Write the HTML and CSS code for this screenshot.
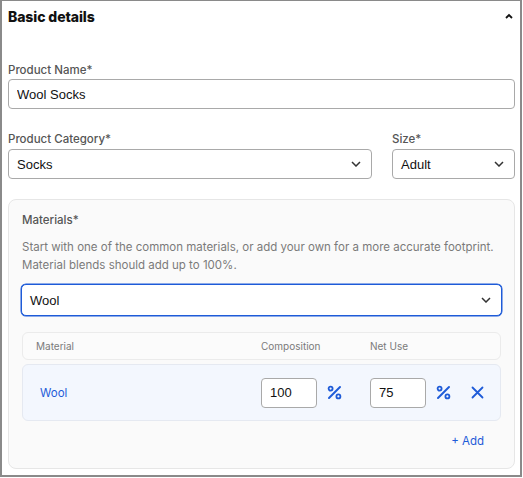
FILE: index.html
```html
<!DOCTYPE html>
<html lang="en">
<head>
<meta charset="utf-8">
<title>Basic details</title>
<link rel="stylesheet" href="styles.css">
</head>
<body>
<section class="card">
  <header class="card-head">
    <h2 class="card-title">Basic details</h2>
    <svg class="collapse" width="8" height="6" viewBox="0 0 8 6"><path d="M1 5 L4 2 L7 5" fill="none" stroke="#111" stroke-width="1.8"/></svg>
  </header>

  <div class="field">
    <label class="label">Product Name*</label>
    <input class="input" type="text" value="Wool Socks">
  </div>

  <div class="field-row">
    <div class="field grow">
      <label class="label">Product Category*</label>
      <div class="select"><span>Socks</span><svg class="chev" width="10" height="6" viewBox="0 0 10 6"><path d="M1 1 L5 5 L9 1" fill="none" stroke="#333" stroke-width="1.5"/></svg></div>
    </div>
    <div class="field size">
      <label class="label">Size*</label>
      <div class="select"><span>Adult</span><svg class="chev" width="10" height="6" viewBox="0 0 10 6"><path d="M1 1 L5 5 L9 1" fill="none" stroke="#333" stroke-width="1.5"/></svg></div>
    </div>
  </div>

  <div class="panel">
    <div class="label panel-label">Materials*</div>
    <p class="hint">Start with one of the common materials, or add your own for a more accurate footprint. Material blends should add up to 100%.</p>
    <div class="select focused"><span>Wool</span><svg class="chev" width="10" height="6" viewBox="0 0 10 6"><path d="M1 1 L5 5 L9 1" fill="none" stroke="#333" stroke-width="1.5"/></svg></div>

    <div class="table-head">
      <span>Material</span>
      <span>Composition</span>
      <span>Net Use</span>
    </div>
    <div class="table-row">
      <span class="mat-name">Wool</span>
      <div class="amount">
        <input class="num" type="text" value="100">
        <svg class="pct" width="15" height="15" viewBox="0 0 15 15"><circle cx="3.6" cy="3.6" r="2" fill="none" stroke="#1e5bd8" stroke-width="1.8"/><circle cx="11.4" cy="11.4" r="2" fill="none" stroke="#1e5bd8" stroke-width="1.8"/><path d="M13 2 L2 13" stroke="#1e5bd8" stroke-width="2" stroke-linecap="round"/></svg>
      </div>
      <div class="amount">
        <input class="num" type="text" value="75">
        <svg class="pct" width="15" height="15" viewBox="0 0 15 15"><circle cx="3.6" cy="3.6" r="2" fill="none" stroke="#1e5bd8" stroke-width="1.8"/><circle cx="11.4" cy="11.4" r="2" fill="none" stroke="#1e5bd8" stroke-width="1.8"/><path d="M13 2 L2 13" stroke="#1e5bd8" stroke-width="2" stroke-linecap="round"/></svg>
      </div>
      <svg class="remove" width="13" height="13" viewBox="0 0 13 13"><path d="M1.5 1.5 L11.5 11.5 M11.5 1.5 L1.5 11.5" stroke="#1e5bd8" stroke-width="1.8" stroke-linecap="round"/></svg>
    </div>
    <div class="add-row"><span class="add">+ Add</span></div>
  </div>
</section>
</body>
</html>
```

FILE: styles.css
```css
* { box-sizing: border-box; }

body {
  margin: 0;
  background: #fff;
  font-family: "Inter", "Liberation Sans", sans-serif;
}

.card {
  width: 522px;
  height: 477px;
  border: 2px solid #8a8a8a;
  border-top-width: 1px;
  padding: 0 5px 0 6px;
}

.card-head {
  height: 30px;
  display: flex;
  align-items: center;
  justify-content: space-between;
}

.card-title {
  margin: 0;
  font-size: 14px;
  font-weight: 800;
  color: #111;
  letter-spacing: -0.1px;
}

.collapse { margin-right: 2px; }

.field { display: flex; flex-direction: column; }

.label {
  font-size: 11.5px;
  line-height: 16px;
  font-weight: 500;
  color: #555;
}

.card-head + .field { margin-top: 31px; }
.card-head + .field .label { margin-bottom: 1px; }

.input,
.select {
  height: 30px;
  border: 1px solid #a9a9a9;
  border-radius: 4px;
  background: #fff;
  font-family: "Liberation Sans", Arial, sans-serif;
  font-size: 13px;
  color: #111;
}

.input {
  width: 100%;
  padding: 0 8px;
  outline: none;
}

.select {
  display: flex;
  align-items: center;
  justify-content: space-between;
  padding: 0 10px 0 8px;
}

.field-row {
  display: flex;
  gap: 20px;
  margin-top: 22px;
}
.field-row .label { margin-bottom: 2px; }
.grow { flex: 1; }
.size { width: 123px; }

.panel {
  margin-top: 20px;
  height: 270px;
  background: #fafafa;
  border: 1px solid #e6e6e6;
  border-radius: 8px;
  padding: 12px 13px 0 13px;
}

.panel-label { font-size: 11.5px; }

.hint {
  margin: 10px 0 10px;
  font-size: 11.5px;
  line-height: 18px;
  color: #7a7a7a;
}

.select.focused {
  height: 32px;
  margin: 0 -1px;
  border: 1.5px solid #1e5bd8;
  border-radius: 5px;
  box-shadow: 0 0 0 0.5px #1e5bd8;
  padding-left: 8px;
  font-size: 13px;
}

.table-head {
  margin-top: 16px;
  height: 28px;
  display: grid;
  grid-template-columns: 225px 109px auto;
  align-items: center;
  padding-left: 13px;
  background: #fbfbfb;
  border: 1px solid #ebebeb;
  border-radius: 6px;
  font-size: 10px;
  color: #7a7a7a;
}

.table-row {
  margin-top: 4px;
  height: 57px;
  display: grid;
  grid-template-columns: 225px 109px 101px 13px;
  align-items: center;
  padding-left: 13px;
  background: #f3f7fe;
  border: 1px solid #e5e9f1;
  border-radius: 6px;
}

.mat-name {
  padding-left: 4px;
  font-size: 11.5px;
  color: #1e5bd8;
}

.amount {
  display: flex;
  align-items: center;
  gap: 10px;
}

.num {
  width: 56px;
  height: 30px;
  border: 1px solid #a9a9a9;
  border-radius: 4px;
  padding: 0 8px;
  font-family: "Liberation Sans", Arial, sans-serif;
  font-size: 13px;
  color: #111;
  background: #fff;
  outline: none;
}

.add-row {
  display: flex;
  justify-content: flex-end;
  padding-right: 17px;
  margin-top: 12px;
}

.add {
  font-size: 11.5px;
  line-height: 16px;
  color: #1e5bd8;
}
```
